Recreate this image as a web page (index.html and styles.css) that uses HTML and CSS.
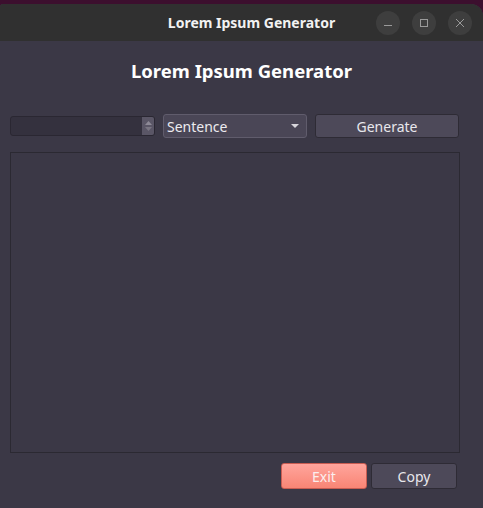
FILE: index.html
```html
<!DOCTYPE html>
<html>
<head>
<meta charset="utf-8">
<link rel="stylesheet" href="styles.css">
</head>
<body>
<div class="desktop">
  <div class="window">
    <div class="titlebar">
      <span class="title">Lorem Ipsum Generator</span>
      <div class="controls">
        <span class="ctl"><svg width="10" height="10" viewBox="0 0 10 10"><path d="M1 7.5H9" stroke="#9a9a9a" stroke-width="1"/></svg></span>
        <span class="ctl"><svg width="10" height="10" viewBox="0 0 10 10"><rect x="1.5" y="1.5" width="7" height="7" fill="none" stroke="#9a9a9a" stroke-width="1"/></svg></span>
        <span class="ctl"><svg width="10" height="10" viewBox="0 0 10 10"><path d="M1 1L9 9M9 1L1 9" stroke="#9a9a9a" stroke-width="1"/></svg></span>
      </div>
    </div>
    <div class="content">
      <h1 class="heading">Lorem Ipsum Generator</h1>
      <div class="toolbar">
        <div class="spinbox">
          <div class="spin-field"></div>
          <div class="spin-arrows">
            <svg width="9" height="14" viewBox="0 0 9 14"><path d="M1 6L4.5 2L8 6Z" fill="#8d8996"/><path d="M1 8L4.5 12L8 8Z" fill="#7a7683"/></svg>
          </div>
        </div>
        <div class="combo">
          <span>Sentence</span>
          <svg width="8" height="4" viewBox="0 0 8 4"><path d="M0 0H8L4 4Z" fill="#d8d6dc"/></svg>
        </div>
        <button class="btn generate">Generate</button>
      </div>
      <div class="textarea"></div>
      <div class="footer">
        <button class="btn exit">Exit</button>
        <button class="btn copy">Copy</button>
      </div>
    </div>
  </div>
</div>
</body>
</html>
```

FILE: styles.css
```css
html, body {
  margin: 0;
  padding: 0;
  background: #3c0f2e;
  width: 483px;
  height: 508px;
  overflow: hidden;
}
.desktop {
  padding-top: 4px;
  height: 504px;
}
.window {
  height: 504px;
  display: flex;
  flex-direction: column;
  border-radius: 3px 12px 0 0;
  overflow: hidden;
  background: #3b3846;
  font-family: "Noto Sans", "DejaVu Sans", sans-serif;
}
.titlebar {
  height: 37px;
  background: #303030;
  display: flex;
  align-items: center;
  justify-content: center;
  position: relative;
}
.title {
  color: #f2f2f2;
  font-weight: bold;
  font-size: 14px;
  margin-left: 20px;
}
.controls {
  position: absolute;
  right: 11px;
  top: 7px;
  display: flex;
  gap: 12px;
}
.ctl {
  width: 24px;
  height: 24px;
  border-radius: 50%;
  background: #3e3e3e;
  display: flex;
  align-items: center;
  justify-content: center;
}
.content {
  flex: 1;
  display: flex;
  flex-direction: column;
  padding: 0 23px 0 10px;
}
.heading {
  margin: 17px 0 0 0;
  text-align: center;
  font-size: 18.5px;
  line-height: 26px;
  color: #ffffff;
  font-weight: bold;
  padding-left: 13px;
}
.toolbar {
  margin-top: 30px;
  display: flex;
  align-items: center;
  gap: 8px;
  height: 24px;
}
.spinbox {
  width: 145px;
  height: 20px;
  display: flex;
  box-sizing: border-box;
  border: 1px solid #2a2732;
  border-radius: 3px;
  background: #34313e;
  overflow: hidden;
}
.spin-field {
  flex: 1;
}
.spin-arrows {
  width: 12px;
  background: #5a5666;
  display: flex;
  align-items: center;
  justify-content: center;
}
.combo {
  width: 144px;
  height: 24px;
  box-sizing: border-box;
  border: 1px solid #605c6c;
  border-radius: 3px;
  background: #4a4656;
  display: flex;
  align-items: center;
  justify-content: space-between;
  padding: 0 7px 0 3px;
  color: #ecebef;
  font-size: 14px;
}
.btn {
  font-family: "Noto Sans", "DejaVu Sans", sans-serif;
  font-size: 14px;
  box-sizing: border-box;
  border-radius: 3px;
  padding: 0;
  color: #e8e7ec;
}
.generate {
  width: 144px;
  height: 24px;
  background: #4d4959;
  border: 1px solid #2e2b35;
}
.textarea {
  margin-top: 14px;
  width: 450px;
  height: 301px;
  box-sizing: border-box;
  border: 1px solid #2b2932;
}
.footer {
  margin-top: 10px;
  display: flex;
  justify-content: flex-end;
  gap: 4px;
  padding-right: 3px;
}
.exit {
  width: 86px;
  height: 26px;
  background: linear-gradient(#ffa59c, #f98575);
  border: 1px solid #c95d52;
  color: #fbeeee;
}
.copy {
  width: 86px;
  height: 26px;
  background: #4d4959;
  border: 1px solid #2e2b35;
}
```
